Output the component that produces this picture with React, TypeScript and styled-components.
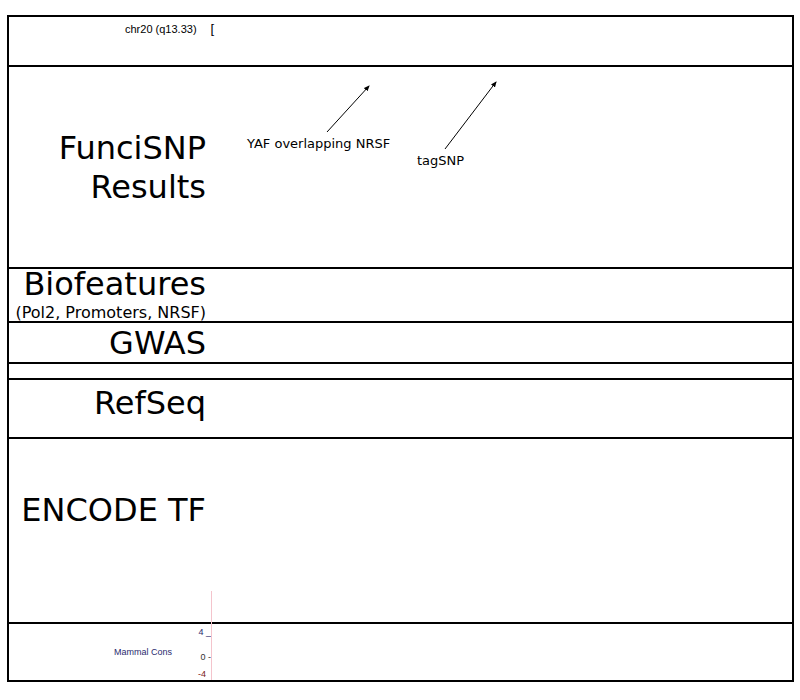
import * as React from "react";
import styled, { createGlobalStyle } from "styled-components";

const GlobalStyle = createGlobalStyle`
  html, body {
    margin: 0;
    padding: 0;
    background: #ffffff;
  }
  body {
    font-family: "DejaVu Sans", sans-serif;
    color: #000;
  }
`;

const Page = styled.div`
  padding: 15px 6px 0 7px;
  width: 800px;
  box-sizing: border-box;
`;

const Frame = styled.div`
  position: relative;
  width: 787px;
  border: 2px solid #000;
  border-bottom: none;
  box-sizing: border-box;
`;

const Track = styled.div<{ $h: number }>`
  position: relative;
  display: flex;
  height: ${(p) => p.$h}px;
  border-bottom: 2px solid #000;
`;

const Label = styled.div<{ $align?: string; $pad?: number }>`
  width: 197px;
  flex: none;
  display: flex;
  flex-direction: column;
  justify-content: ${(p) => p.$align || "center"};
  align-items: flex-end;
  padding-top: ${(p) => p.$pad || 0}px;
  box-sizing: border-box;
  text-align: right;
  white-space: nowrap;
`;

const BigText = styled.div<{ $lh?: number }>`
  font-size: 32px;
  line-height: ${(p) => p.$lh || 39}px;
`;

const SubText = styled.div`
  font-size: 16px;
  line-height: 18px;
  margin-top: 5px;
`;

const Plot = styled.div`
  position: relative;
  flex: 1;
`;

const Ideo = styled.div`
  display: flex;
  align-items: flex-start;
  padding-top: 6px;
  padding-left: 116px;
  font-family: "Liberation Sans", Arial, sans-serif;
  font-size: 11px;
  gap: 14px;
`;

const Bracket = styled.span`
  font-size: 13px;
  line-height: 12px;
`;

const Note = styled.div<{ $x: number; $y: number }>`
  position: absolute;
  left: ${(p) => p.$x}px;
  top: ${(p) => p.$y}px;
  font-size: 13px;
  white-space: nowrap;
`;

const Arrows = styled.svg`
  position: absolute;
  left: 0;
  top: 0;
  overflow: visible;
`;

const ConsLabel = styled.div`
  width: 197px;
  flex: none;
  display: flex;
  align-items: center;
  padding-left: 105px;
  box-sizing: border-box;
  font-family: "Liberation Sans", Arial, sans-serif;
  font-size: 9px;
  color: #2a2a6e;
`;

const Axis = styled.div`
  position: absolute;
  left: 186px;
  top: 0;
  bottom: 0;
  width: 16px;
  font-family: "Liberation Sans", Arial, sans-serif;
  font-size: 9px;
`;

const Tick = styled.span<{ $y: number; $c: string }>`
  position: absolute;
  right: 0;
  top: ${(p) => p.$y}px;
  color: ${(p) => p.$c};
  white-space: nowrap;
`;

const Guide = styled.div`
  position: absolute;
  left: 202px;
  top: -33px;
  bottom: 0;
  width: 1px;
  background: #f4c4cc;
`;

export default function App() {
  return (
    <>
      <GlobalStyle />
      <Page>
        <Frame>
          <Track $h={48}>
            <Ideo>
              <span>chr20 (q13.33)</span>
              <Bracket>[</Bracket>
            </Ideo>
          </Track>

          <Track $h={200}>
            <Label $align="flex-start" $pad={62}>
              <BigText>FunciSNP</BigText>
              <BigText>Results</BigText>
            </Label>
            <Plot>
              <Note $x={41} $y={69}>YAF overlapping NRSF</Note>
              <Note $x={211} $y={86}>tagSNP</Note>
              <Arrows width="1" height="1">
                <defs>
                  <marker id="ah" markerWidth="6" markerHeight="6" refX="5" refY="3" orient="auto">
                    <path d="M0,0.5 L6,3 L0,5.5 z" fill="#000" />
                  </marker>
                </defs>
                <line x1="121" y1="65" x2="163" y2="19" stroke="#000" strokeWidth="1" markerEnd="url(#ah)" />
                <line x1="239" y1="82" x2="290" y2="15" stroke="#000" strokeWidth="1" markerEnd="url(#ah)" />
              </Arrows>
            </Plot>
          </Track>

          <Track $h={52}>
            <Label $align="flex-start">
              <BigText $lh={30}>Biofeatures</BigText>
              <SubText>(Pol2, Promoters, NRSF)</SubText>
            </Label>
          </Track>

          <Track $h={39}>
            <Label $align="flex-start" $pad={1}>
              <BigText>GWAS</BigText>
            </Label>
          </Track>

          <Track $h={14} />

          <Track $h={57}>
            <Label $align="flex-start" $pad={4}>
              <BigText>RefSeq</BigText>
            </Label>
          </Track>

          <Track $h={183}>
            <Label $align="flex-start" $pad={52}>
              <BigText>ENCODE TF</BigText>
            </Label>
          </Track>

          <Track $h={56}>
            <ConsLabel>Mammal Cons</ConsLabel>
            <Axis>
              <Tick $y={3} $c="#2a2a6e">4 _</Tick>
              <Tick $y={28} $c="#333">0 -</Tick>
              <Tick $y={45} $c="#7a2020">-4&nbsp;&nbsp;</Tick>
            </Axis>
            <Guide />
          </Track>
        </Frame>
      </Page>
    </>
  );
}
